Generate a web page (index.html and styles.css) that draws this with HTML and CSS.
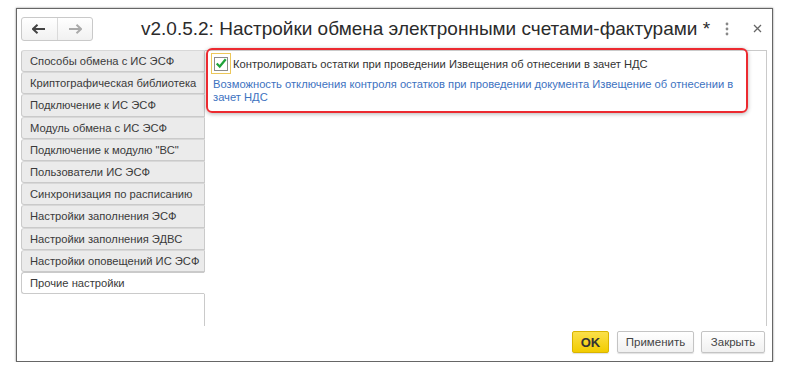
FILE: index.html
```html
<!DOCTYPE html>
<html lang="ru">
<head>
    <meta charset="UTF-8">
    <title>Настройки обмена электронными счетами-фактурами</title>
    <link rel="stylesheet" href="styles.css">
</head>
<body>
    <div class="window">
        <div class="header">
            <div class="nav">
                <span class="nav-btn">
                    <svg width="14" height="10" viewBox="0 0 14 10"><path d="M1 5h12M5.5 0.8L1 5l4.5 4.2" fill="none" stroke="#444" stroke-width="2"/></svg>
                </span>
                <span class="nav-btn">
                    <svg width="14" height="10" viewBox="0 0 14 10"><path d="M1 5h12M8.5 0.8L13 5l-4.5 4.2" fill="none" stroke="#aaa" stroke-width="2"/></svg>
                </span>
            </div>
            <div class="title">v2.0.5.2: Настройки обмена электронными счетами-фактурами *</div>
            <div class="more">
                <svg width="4" height="14" viewBox="0 0 4 14"><circle cx="2" cy="2" r="1.4" fill="#888"/><circle cx="2" cy="7" r="1.4" fill="#888"/><circle cx="2" cy="12" r="1.4" fill="#888"/></svg>
            </div>
            <div class="close">
                <svg width="9" height="9" viewBox="0 0 9 9"><path d="M1 1l7 7M8 1l-7 7" stroke="#666" stroke-width="1.3"/></svg>
            </div>
        </div>

        <div class="main">
            <div class="tabs">
                <div class="tab">Способы обмена с ИС ЭСФ</div>
                <div class="tab">Криптографическая библиотека</div>
                <div class="tab">Подключение к ИС ЭСФ</div>
                <div class="tab">Модуль обмена с ИС ЭСФ</div>
                <div class="tab">Подключение к модулю "ВС"</div>
                <div class="tab">Пользователи ИС ЭСФ</div>
                <div class="tab">Синхронизация по расписанию</div>
                <div class="tab">Настройки заполнения ЭСФ</div>
                <div class="tab">Настройки заполнения ЭДВС</div>
                <div class="tab">Настройки оповещений ИС ЭСФ</div>
                <div class="tab active">Прочие настройки</div>
                <div class="tabs-rest"></div>
            </div>
            <div class="panel">
                <div class="highlight">
                    <label class="check-row">
                        <span class="check-focus">
                            <span class="check-box">
                                <svg width="14" height="13" viewBox="0 0 14 13"><path d="M2 6.5l3.5 3.5L12.5 1.5" fill="none" stroke="#1fa33a" stroke-width="2.6"/></svg>
                            </span>
                        </span>
                        <span class="check-label">Контролировать остатки при проведении Извещения об отнесении в зачет НДС</span>
                    </label>
                    <div class="hint">Возможность отключения контроля остатков при проведении документа Извещение об отнесении в зачет НДС</div>
                </div>
            </div>
        </div>

        <div class="footer">
            <button class="btn btn-ok">OK</button>
            <button class="btn btn-apply">Применить</button>
            <button class="btn btn-close">Закрыть</button>
        </div>
    </div>
</body>
</html>
```

FILE: styles.css
```css
body {
    margin: 0;
    background: #fff;
    font-family: Arial, "Liberation Sans", sans-serif;
    color: #333;
}
.window {
    margin: 8px 0 0 16px;
    width: 755px;
    height: 352px;
    border: 1px solid #666;
    box-shadow: 0 0 2px rgba(0, 0, 0, 0.45);
    display: flex;
    flex-direction: column;
}
.header {
    display: flex;
    align-items: center;
    height: 34px;
    padding: 5px 0 0 4px;
    box-sizing: border-box;
}
.nav {
    flex-shrink: 0;
    display: flex;
    width: 72px;
    height: 24px;
    border: 1px solid #c9c9c9;
    border-radius: 3px;
    box-sizing: border-box;
    background: linear-gradient(#fff, #f1f1f1);
}
.nav-btn {
    flex: 1;
    display: flex;
    align-items: center;
    justify-content: center;
}
.nav-btn + .nav-btn {
    border-left: 1px solid #dadada;
}
.title {
    margin-left: 48px;
    font-size: 19px;
    color: #2b2b2b;
    white-space: nowrap;
    flex: 1;
}
.more {
    flex-shrink: 0;
    width: 4px;
    margin-right: 24px;
    display: flex;
}
.close {
    flex-shrink: 0;
    width: 9px;
    margin-right: 10px;
    display: flex;
}
.main {
    display: flex;
    margin: 7px 0 0 4px;
    height: 276px;
}
.tabs {
    width: 184px;
    display: flex;
    flex-direction: column;
}
.tab {
    height: 22.2px;
    box-sizing: border-box;
    border: 1px solid #cacaca;
    border-top-color: #d8d8d8;
    border-radius: 3px 0 0 3px;
    background: #ebebeb;
    font-size: 11.2px;
    line-height: 20px;
    padding-left: 8px;
    color: #3a3a3a;
    white-space: nowrap;
}
.tab.active {
    background: #fff;
    border-color: #cacaca #fff #cacaca #cacaca;
}
.tabs-rest {
    flex: 1;
    border-right: 1px solid #cacaca;
}
.panel {
    flex: 1;
    border-top: 1px solid #cacaca;
    border-right: 1px solid #cacaca;
    margin-right: 5px;
}
.highlight {
    width: 542px;
    height: 65px;
    box-sizing: border-box;
    margin: -3px 0 0 1px;
    border: 2px solid #ec2a30;
    border-radius: 6px;
    box-shadow: 0 1px 4px rgba(0, 0, 0, 0.3);
    padding: 3px 0 0 3px;
}
.check-row {
    display: flex;
    align-items: center;
}
.check-focus {
    width: 20px;
    height: 21px;
    box-sizing: border-box;
    border: 1px solid #ecc75a;
    display: flex;
    align-items: center;
    justify-content: center;
}
.check-box {
    width: 14px;
    height: 14px;
    box-sizing: border-box;
    border: 1px solid #8c8c8c;
    background: #fff;
    display: flex;
    align-items: center;
    justify-content: center;
}
.check-label {
    margin-left: 2px;
    font-size: 11.2px;
    color: #333;
    white-space: nowrap;
}
.hint {
    margin: 4px 0 0 2px;
    font-size: 11.2px;
    line-height: 13px;
    color: #3d72bf;
    width: 530px;
}
.footer {
    display: flex;
    justify-content: flex-end;
    gap: 7px;
    padding: 5px 7px 0 0;
}
.btn {
    height: 22px;
    padding: 0;
    border: 1px solid #c4c4c4;
    border-radius: 2px;
    background: linear-gradient(#fff, #f0f0f0);
    font-family: Arial, "Liberation Sans", sans-serif;
    font-size: 11.5px;
    color: #444;
    box-shadow: 0 1px 1px rgba(0, 0, 0, 0.12);
}
.btn-ok {
    width: 37px;
    margin-right: 1px;
    background: linear-gradient(#fbe04a, #f2cc00);
    border-color: #d9b400;
    font-weight: bold;
    font-size: 13px;
    color: #333;
}
.btn-apply {
    width: 77px;
}
.btn-close {
    width: 64px;
}
```
